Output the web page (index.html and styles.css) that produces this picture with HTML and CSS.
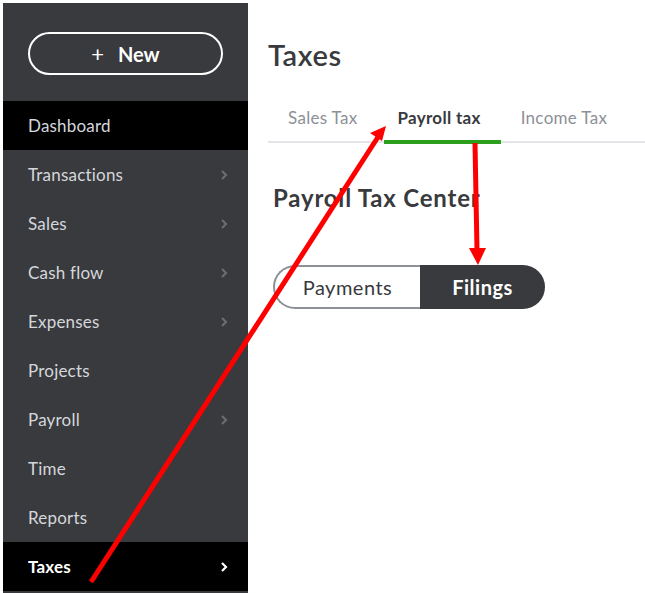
FILE: index.html
```html
<!DOCTYPE html>
<html lang="en">

<head>
    <meta charset="UTF-8">
    <meta name="viewport" content="width=device-width, initial-scale=1.0">
    <title>Taxes</title>
    <link rel="stylesheet" href="styles.css">
</head>

<body>
    <div class="app">
        <nav class="sidebar">
            <button class="new-btn"><span class="plus">+</span> New</button>
            <ul class="menu">
                <li class="menu-item current">Dashboard</li>
                <li class="menu-item">Transactions <svg class="chev" viewBox="0 0 8 12"><polyline points="2,2 6,6 2,10" /></svg></li>
                <li class="menu-item">Sales <svg class="chev" viewBox="0 0 8 12"><polyline points="2,2 6,6 2,10" /></svg></li>
                <li class="menu-item">Cash flow <svg class="chev" viewBox="0 0 8 12"><polyline points="2,2 6,6 2,10" /></svg></li>
                <li class="menu-item">Expenses <svg class="chev" viewBox="0 0 8 12"><polyline points="2,2 6,6 2,10" /></svg></li>
                <li class="menu-item">Projects</li>
                <li class="menu-item">Payroll <svg class="chev" viewBox="0 0 8 12"><polyline points="2,2 6,6 2,10" /></svg></li>
                <li class="menu-item">Time</li>
                <li class="menu-item">Reports</li>
                <li class="menu-item active">Taxes <svg class="chev" viewBox="0 0 8 12"><polyline points="2,2 6,6 2,10" /></svg></li>
            </ul>
        </nav>

        <main class="content">
            <h1 class="page-title">Taxes</h1>
            <div class="tabs">
                <div class="tab">Sales Tax</div>
                <div class="tab selected">Payroll tax</div>
                <div class="tab">Income Tax</div>
            </div>

            <h2 class="section-title">Payroll Tax Center</h2>

            <div class="toggle">
                <button class="toggle-btn">Payments</button>
                <button class="toggle-btn on">Filings</button>
            </div>
        </main>
    </div>

    <!-- annotation arrows drawn over the screenshot -->
    <svg class="arrows" viewBox="0 0 645 593" width="645" height="593">
        <line x1="91" y1="582" x2="378" y2="137" />
        <polygon points="386,126 370,133 382,141" />
        <line x1="475" y1="143" x2="477" y2="250" />
        <polygon points="469,248 486,248 478,265" />
    </svg>
</body>

</html>
```

FILE: styles.css
```css
body {
    margin: 0;
    padding: 0;
    background: #fff;
    font-family: Lato, "Open Sans", sans-serif;
    color: #393a3d;
    width: 645px;
    height: 593px;
    overflow: hidden;
    position: relative;
}

.app {
    display: flex;
    height: 593px;
    padding: 3px 0 0 3px;
    box-sizing: border-box;
}

.sidebar {
    width: 245px;
    flex-shrink: 0;
    background: #393a3d;
    padding-top: 29px;
    box-sizing: border-box;
}

.new-btn {
    display: block;
    width: 195px;
    height: 43px;
    margin: 0 0 26px 25px;
    border: 2px solid #fff;
    border-radius: 22px;
    background: transparent;
    color: #fff;
    font-family: inherit;
    font-size: 20px;
    font-weight: 700;
    cursor: pointer;
}

.new-btn .plus {
    font-weight: 400;
    font-size: 22px;
    margin-right: 9px;
}

.menu {
    list-style: none;
    margin: 0;
    padding: 0;
}

.menu-item {
    height: 49px;
    display: flex;
    align-items: center;
    justify-content: space-between;
    padding: 0 20px 0 25px;
    font-size: 17px;
    letter-spacing: 0.2px;
    color: #d4d7dc;
}

.menu-item.current {
    background: #000;
}

.menu-item.active {
    background: #000;
    color: #fff;
    font-weight: 700;
}

.chev {
    width: 8px;
    height: 12px;
    fill: none;
    stroke: #6b6c72;
    stroke-width: 2.2;
}

.menu-item.active .chev {
    stroke: #fff;
}

.content {
    flex: 1;
    padding-left: 20px;
}

.page-title {
    margin: 35px 0 0;
    font-size: 29px;
    font-weight: 600;
    letter-spacing: 0.6px;
    line-height: 34px;
}

.tabs {
    display: flex;
    margin-top: 29px;
    border-bottom: 2px solid #e3e5e8;
    height: 42px;
    box-sizing: border-box;
}

.tab {
    padding: 6px 20px 0;
    font-size: 17px;
    letter-spacing: 0.3px;
    color: #8d9096;
}

.tab.selected {
    padding-left: 13px;
    margin-left: 7px;
    color: #393a3d;
    font-weight: 700;
    border-bottom: 4px solid #2ca01c;
    margin-bottom: -3px;
}

.section-title {
    margin: 41px 0 0 5px;
    font-size: 24px;
    font-weight: 700;
    letter-spacing: 0.8px;
    line-height: 28px;
}

.toggle {
    display: flex;
    margin: 53px 0 0 5px;
}

.toggle-btn {
    height: 44px;
    border: 2px solid #8d9096;
    border-right: none;
    border-radius: 22px 0 0 22px;
    background: #fff;
    color: #393a3d;
    font-family: inherit;
    font-size: 20px;
    letter-spacing: 0.5px;
    width: 147px;
    padding: 0;
}

.toggle-btn.on {
    width: 125px;
    border: none;
    border-radius: 0 22px 22px 0;
    background: #393a3d;
    color: #fff;
    font-weight: 700;
}

.arrows {
    position: absolute;
    left: 0;
    top: 0;
    pointer-events: none;
}

.arrows line {
    stroke: #ff0000;
    stroke-width: 5;
}

.arrows polygon {
    fill: #ff0000;
}
```
